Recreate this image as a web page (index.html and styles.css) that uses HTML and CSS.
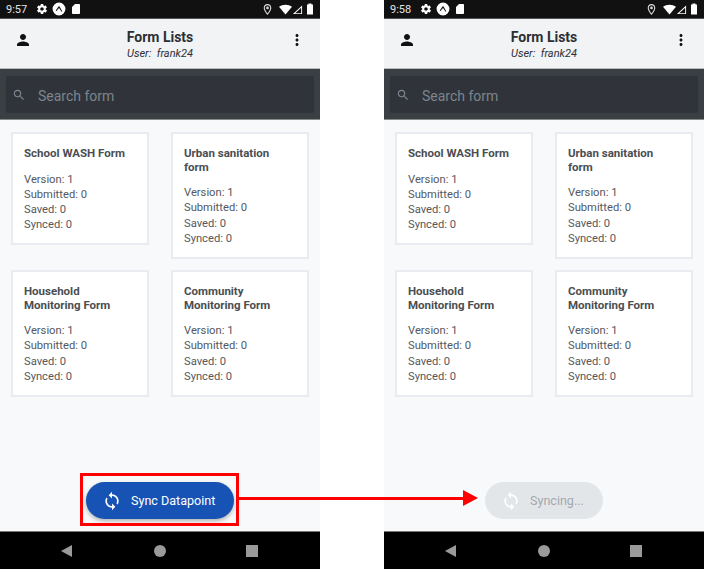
FILE: index.html
```html
<!DOCTYPE html>
<html>
<head>
    <title>Sync Datapoint</title>
    <link rel="stylesheet" href="styles.css">
</head>
<body>
    <svg class="defs" width="0" height="0">
        <symbol id="sync" viewBox="0 0 24 24">
            <path d="M12 4V1L8 5l4 4V6c3.31 0 6 2.69 6 6 0 1.01-.25 1.97-.7 2.8l1.46 1.46C19.54 15.03 20 13.57 20 12c0-4.42-3.58-8-8-8zm0 14c-3.31 0-6-2.69-6-6 0-1.01.25-1.97.7-2.8L5.24 7.74C4.46 8.97 4 10.43 4 12c0 4.42 3.58 8 8 8v3l4-4-4-4v3z"/>
        </symbol>
        <symbol id="search" viewBox="0 0 24 24">
            <path d="M15.5 14h-.79l-.28-.27C15.41 12.59 16 11.11 16 9.5 16 5.91 13.09 3 9.5 3S3 5.91 3 9.5 5.91 16 9.5 16c1.61 0 3.09-.59 4.23-1.57l.27.28v.79l5 4.99L20.49 19l-4.99-5zm-6 0C7.01 14 5 11.99 5 9.5S7.01 5 9.5 5 14 7.01 14 9.5 11.99 14 9.5 14z"/>
        </symbol>
        <symbol id="person" viewBox="0 0 24 24">
            <path d="M12 12c2.21 0 4-1.79 4-4s-1.79-4-4-4-4 1.79-4 4 1.79 4 4 4zm0 2c-2.67 0-8 1.34-8 4v2h16v-2c0-2.66-5.33-4-8-4z"/>
        </symbol>
        <symbol id="more" viewBox="0 0 24 24">
            <path d="M12 8c1.1 0 2-.9 2-2s-.9-2-2-2-2 .9-2 2 .9 2 2 2zm0 2c-1.1 0-2 .9-2 2s.9 2 2 2 2-.9 2-2-.9-2-2-2zm0 6c-1.1 0-2 .9-2 2s.9 2 2 2 2-.9 2-2-.9-2-2-2z"/>
        </symbol>
        <symbol id="gear" viewBox="0 0 24 24">
            <path d="M19.4 13c.04-.32.1-.66.1-1s-.06-.68-.1-1l2.1-1.65c.2-.15.25-.42.12-.64l-2-3.46c-.12-.22-.39-.3-.61-.22l-2.49 1c-.52-.4-1.08-.73-1.69-.98l-.38-2.65A.49.49 0 0 0 14 2h-4c-.25 0-.46.18-.49.42l-.38 2.65c-.61.25-1.17.59-1.69.98l-2.49-1c-.23-.09-.49 0-.61.22l-2 3.46c-.13.22-.07.49.12.64L4.6 11c-.04.32-.1.66-.1 1s.06.68.1 1l-2.1 1.65c-.2.15-.25.42-.12.64l2 3.46c.12.22.39.3.61.22l2.49-1c.52.4 1.08.73 1.69.98l.38 2.65c.03.24.24.42.49.42h4c.25 0 .46-.18.49-.42l.38-2.65c.61-.25 1.17-.59 1.69-.98l2.49 1c.23.09.49 0 .61-.22l2-3.46c.13-.22.07-.49-.12-.64L19.4 13zM12 15.5c-1.93 0-3.5-1.57-3.5-3.5s1.57-3.5 3.5-3.5 3.5 1.57 3.5 3.5-1.57 3.5-3.5 3.5z"/>
        </symbol>
        <symbol id="expo" viewBox="0 0 24 24">
            <path fill-rule="evenodd" d="M12 1a11 11 0 1 0 0 22 11 11 0 0 0 0-22zm0 6.2c.5 0 .8.3 1.1.8l4.2 7.3c.4.7.2 1.2-.4 1.2-.5 0-.9-.4-1.3-1L12 10.300l-3.600 4.200c-.4.6-.8 1-1.300 1-.6 0-.8-.5-.4-1.200L10.900 8c.3-.5.6-.8 1.100-.8z"/>
        </symbol>
        <symbol id="sdcard" viewBox="0 0 24 24">
            <path d="M18 2h-8L4 8v12c0 1.100.9 2 2 2h12c1.100 0 2-.9 2-2V4c0-1.100-.9-2-2-2z"/>
        </symbol>
        <symbol id="pin" viewBox="0 0 24 24">
            <path d="M12 2C8 2 5 5 5 9c0 5 7 13 7 13s7-8 7-13c0-4-3-7-7-7zm0 17c-2-2.600-5-7-5-10 0-2.900 2.100-5 5-5s5 2.100 5 5c0 3-3 7.400-5 10z"/>
            <circle cx="12" cy="9" r="2.500"/>
        </symbol>
    </svg>

    <div class="stage">
        <div class="phone">
            <div class="status-bar">
                <span class="clock">9:57</span>
                <svg class="st-icon"><use href="#gear"/></svg>
                <svg class="st-icon expo"><use href="#expo"/></svg>
                <svg class="st-icon"><use href="#sdcard"/></svg>
                <span class="status-right">
                    <svg class="st-icon pin"><use href="#pin"/></svg>
                    <svg class="st-icon wifi" viewBox="0 0 24 24"><path d="M12 21 0 7c3.300-2.700 7.400-4 12-4s8.700 1.300 12 4z"/></svg>
                    <svg class="st-icon signal" viewBox="0 0 24 24"><path fill-rule="evenodd" d="M22 3v19H2zM20 8 7 20h13z"/></svg>
                    <svg class="st-icon battery" viewBox="0 0 24 24"><path d="M9 1h6v2h3v20H6V3h3z"/></svg>
                </span>
            </div>
            <div class="app-header">
                <svg class="head-icon"><use href="#person"/></svg>
                <div class="head-title">
                    <div class="title">Form Lists</div>
                    <div class="subtitle">User:&nbsp; frank24</div>
                </div>
                <svg class="head-icon"><use href="#more"/></svg>
            </div>
            <div class="search-bar">
                <div class="search-input">
                    <svg class="search-icon"><use href="#search"/></svg>
                    <span class="search-text">Search form</span>
                </div>
            </div>
            <div class="content">
                <div class="form-grid">
                    <div class="form-card">
                        <h4>School WASH Form</h4>
                        <p>Version: 1</p><p>Submitted: 0</p><p>Saved: 0</p><p>Synced: 0</p>
                    </div>
                    <div class="form-card">
                        <h4>Urban sanitation form</h4>
                        <p>Version: 1</p><p>Submitted: 0</p><p>Saved: 0</p><p>Synced: 0</p>
                    </div>
                    <div class="form-card">
                        <h4>Household Monitoring Form</h4>
                        <p>Version: 1</p><p>Submitted: 0</p><p>Saved: 0</p><p>Synced: 0</p>
                    </div>
                    <div class="form-card">
                        <h4>Community Monitoring Form</h4>
                        <p>Version: 1</p><p>Submitted: 0</p><p>Saved: 0</p><p>Synced: 0</p>
                    </div>
                </div>
                <div class="sync-row">
                    <div class="sync-button">
                        <svg class="sync-icon"><use href="#sync"/></svg>
                        <span>Sync Datapoint</span>
                    </div>
                </div>
            </div>
            <div class="nav-bar">
                <span class="nav-back"></span>
                <span class="nav-home"></span>
                <span class="nav-recent"></span>
            </div>
        </div>

        <div class="phone">
            <div class="status-bar">
                <span class="clock">9:58</span>
                <svg class="st-icon"><use href="#gear"/></svg>
                <svg class="st-icon expo"><use href="#expo"/></svg>
                <svg class="st-icon"><use href="#sdcard"/></svg>
                <span class="status-right">
                    <svg class="st-icon pin"><use href="#pin"/></svg>
                    <svg class="st-icon wifi" viewBox="0 0 24 24"><path d="M12 21 0 7c3.300-2.700 7.400-4 12-4s8.700 1.300 12 4z"/></svg>
                    <svg class="st-icon signal" viewBox="0 0 24 24"><path fill-rule="evenodd" d="M22 3v19H2zM20 8 7 20h13z"/></svg>
                    <svg class="st-icon battery" viewBox="0 0 24 24"><path d="M9 1h6v2h3v20H6V3h3z"/></svg>
                </span>
            </div>
            <div class="app-header">
                <svg class="head-icon"><use href="#person"/></svg>
                <div class="head-title">
                    <div class="title">Form Lists</div>
                    <div class="subtitle">User:&nbsp; frank24</div>
                </div>
                <svg class="head-icon"><use href="#more"/></svg>
            </div>
            <div class="search-bar">
                <div class="search-input">
                    <svg class="search-icon"><use href="#search"/></svg>
                    <span class="search-text">Search form</span>
                </div>
            </div>
            <div class="content">
                <div class="form-grid">
                    <div class="form-card">
                        <h4>School WASH Form</h4>
                        <p>Version: 1</p><p>Submitted: 0</p><p>Saved: 0</p><p>Synced: 0</p>
                    </div>
                    <div class="form-card">
                        <h4>Urban sanitation form</h4>
                        <p>Version: 1</p><p>Submitted: 0</p><p>Saved: 0</p><p>Synced: 0</p>
                    </div>
                    <div class="form-card">
                        <h4>Household Monitoring Form</h4>
                        <p>Version: 1</p><p>Submitted: 0</p><p>Saved: 0</p><p>Synced: 0</p>
                    </div>
                    <div class="form-card">
                        <h4>Community Monitoring Form</h4>
                        <p>Version: 1</p><p>Submitted: 0</p><p>Saved: 0</p><p>Synced: 0</p>
                    </div>
                </div>
                <div class="sync-row">
                    <div class="sync-button syncing">
                        <svg class="sync-icon"><use href="#sync"/></svg>
                        <span>Syncing...</span>
                    </div>
                </div>
            </div>
            <div class="nav-bar">
                <span class="nav-back"></span>
                <span class="nav-home"></span>
                <span class="nav-recent"></span>
            </div>
        </div>

        <!-- annotation over the screenshots -->
        <div class="callout-box"></div>
        <div class="callout-line"></div>
        <div class="callout-head"></div>
    </div>
</body>
</html>
```

FILE: styles.css
```css
html, body {
    margin: 0;
    padding: 0;
    background-color: #ffffff;
}

body {
    font-family: Roboto, "Liberation Sans", sans-serif;
    overflow: hidden;
}

.defs {
    position: absolute;
}

.stage {
    position: relative;
    width: 704px;
    height: 569px;
    display: flex;
    gap: 64px;
}

.phone {
    width: 320px;
    height: 569px;
    display: flex;
    flex-direction: column;
    background-color: #f8f9fb;
}

/* status bar */
.status-bar {
    height: 18px;
    background-color: #111111;
    border-bottom: 1px solid #555;
    display: flex;
    align-items: center;
    padding: 0 4px 0 6px;
    color: #e4e4e4;
    font-size: 11px;
    flex-shrink: 0;
}

.clock {
    width: 30px;
}

.st-icon {
    width: 12px;
    height: 12px;
    fill: #ffffff;
    margin-right: 4px;
}

.st-icon.expo {
    width: 14px;
    height: 14px;
}

.status-right {
    margin-left: auto;
    display: flex;
    align-items: center;
}

.status-right .st-icon {
    margin: 0;
}

.status-right .st-icon.pin {
    width: 13px;
    height: 13px;
    margin-right: 5px;
    fill: #dddddd;
}

.status-right .st-icon.wifi {
    width: 13px;
    height: 13px;
}

.status-right .st-icon.signal {
    width: 11px;
    height: 11px;
    margin-right: 1px;
}

.status-right .st-icon.battery {
    width: 12px;
    height: 12px;
}

/* header */
.app-header {
    height: 49px;
    background-color: #f2f3f5;
    border-bottom: 1px solid #bbb;
    display: flex;
    align-items: center;
    justify-content: space-between;
    padding: 0 14px;
    flex-shrink: 0;
}

.head-icon {
    width: 18px;
    height: 18px;
    fill: #111111;
    margin-top: -7px;
}

.head-title {
    text-align: center;
    color: #2c2f33;
    margin-top: 1px;
}

.title {
    font-size: 14px;
    font-weight: 700;
    line-height: 18px;
}

.subtitle {
    font-size: 11px;
    font-style: italic;
    line-height: 15px;
}

/* search */
.search-bar {
    height: 51px;
    box-sizing: border-box;
    padding: 7px 6px;
    background-color: #3a3f44;
    border-bottom: 1px solid #888;
    flex-shrink: 0;
}

.search-input {
    height: 37px;
    background-color: #30343a;
    border-radius: 2px;
    display: flex;
    align-items: center;
    padding-left: 6px;
    color: #7d848c;
    font-size: 14px;
}

.search-icon {
    width: 14px;
    height: 14px;
    fill: #7d848c;
    margin-right: 12px;
}

.search-text {
    margin-top: 2px;
}

/* cards */
.content {
    flex: 1;
    display: flex;
    flex-direction: column;
    padding: 12px 11px 0 11px;
}

.form-grid {
    display: grid;
    grid-template-columns: 138px 138px;
    column-gap: 22px;
    row-gap: 11px;
    align-items: start;
}

.form-card {
    background-color: #ffffff;
    border: 2px solid #e8ebef;
    box-sizing: border-box;
    padding: 13px 11px 11px 11px;
    color: #54585d;
    font-size: 11.2px;
    line-height: 15.2px;
}

.form-card h4 {
    margin: 0 0 11px 0;
    font-size: 11.5px;
    font-weight: 700;
    line-height: 13.6px;
    color: #4a4e53;
}

.form-card p {
    margin: 0;
}

/* sync button */
.sync-row {
    margin-top: auto;
    display: flex;
    justify-content: center;
    padding-bottom: 12px;
}

.sync-button {
    width: 148px;
    height: 37px;
    box-sizing: border-box;
    border-radius: 19px;
    background-color: #1753b5;
    color: #ffffff;
    font-size: 12.55px;
    display: flex;
    align-items: center;
    padding-left: 16px;
    box-shadow: 0 2px 4px rgba(0, 0, 0, 0.3);
}

.sync-icon {
    width: 20px;
    height: 20px;
    fill: #ffffff;
    margin-right: 9px;
    flex-shrink: 0;
}

.sync-button.syncing {
    width: 118px;
    background-color: #e3e6e9;
    color: #a3a8ae;
    box-shadow: none;
}

/* android nav */
.nav-bar {
    height: 38px;
    background-color: #000000;
    border-top: 1px solid #777;
    box-sizing: border-box;
    flex-shrink: 0;
    display: flex;
    align-items: center;
    padding-left: 61px;
}

.nav-back {
    width: 0;
    height: 0;
    border-top: 6px solid transparent;
    border-bottom: 6px solid transparent;
    border-right: 11px solid #9a9a9a;
    margin-right: 82px;
}

.nav-home {
    width: 12px;
    height: 12px;
    border-radius: 50%;
    background-color: #9a9a9a;
    margin-right: 80px;
}

.nav-recent {
    width: 12px;
    height: 12px;
    background-color: #9a9a9a;
}

/* red annotation */
.callout-box {
    position: absolute;
    left: 80px;
    top: 473px;
    width: 159px;
    height: 53px;
    box-sizing: border-box;
    border: 3px solid #ff0000;
}

.callout-line {
    position: absolute;
    left: 239px;
    top: 497px;
    width: 225px;
    height: 3px;
    background-color: #ff0000;
}

.callout-head {
    position: absolute;
    left: 463px;
    top: 490px;
    width: 0;
    height: 0;
    border-top: 8.5px solid transparent;
    border-bottom: 8.5px solid transparent;
    border-left: 15px solid #ff0000;
}
```
